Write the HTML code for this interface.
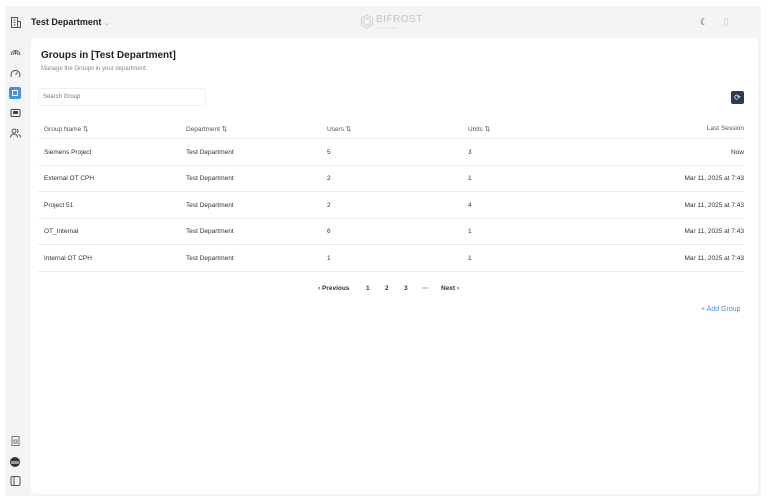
<!DOCTYPE html>
<html><head><meta charset="utf-8"><style>
*{box-sizing:border-box;margin:0;padding:0}
body{width:768px;height:504px;background:#fff;font-family:"Liberation Sans",sans-serif;position:relative;overflow:hidden;color:#222}
.frame{position:absolute;left:5px;top:6px;width:756px;height:490px;background:#f3f4f6}
.main{position:absolute;left:31px;top:38px;width:727px;height:456px;background:#fff;border-radius:4px}
.t{position:absolute;white-space:nowrap}
.line{position:absolute;left:38px;width:706px;height:1px;background:#ececee}
.ico{position:absolute;left:10px;width:11px;height:10px}
</style></head><body>
<div class="frame"></div>
<svg style="position:absolute;left:10px;top:16px" width="12" height="13" viewBox="0 0 12 13" fill="none" stroke="#555" stroke-width="1"><rect x="1.5" y="1.5" width="6" height="10"/><path d="M7.5 5.5h3v6h-3M3.5 4h2M3.5 6.5h2M3.5 9h2"/></svg>
<div class="t" style="left:31px;top:17px;font-size:9px;font-weight:bold;color:#222">Test Department <span style="color:#aaa;font-weight:normal;font-size:7px">⌄</span></div>
<svg style="position:absolute;left:360px;top:14px" width="14" height="15" viewBox="0 0 14 15" fill="none" stroke="#c8c8c8" stroke-width="0.8"><path d="M7 1l5.5 3v7L7 14 1.5 11V4z"/><circle cx="7" cy="7.5" r="3.5"/></svg>
<div class="t" style="left:376px;top:14px;font-size:10px;color:#c4c4c4;letter-spacing:0.5px">BIFROST</div>
<div class="t" style="left:377px;top:26px;font-size:3px;color:#ccc;letter-spacing:1px">SYSTEMS</div>
<div class="t" style="left:700px;top:17px;font-size:9px;color:#333">☾</div>
<div style="position:absolute;left:724px;top:18px;width:4px;height:8px;border:1px solid #ddd"></div>
<svg class="ico" style="top:47px" viewBox="0 0 11 10" fill="none" stroke="#555" stroke-width="1"><path d="M1 8a4.5 4.5 0 0 1 9 0M3 8a2.5 2.5 0 0 1 5 0M5.5 3.5v4"/></svg>
<svg class="ico" style="top:68px" viewBox="0 0 11 10" fill="none" stroke="#555" stroke-width="1"><path d="M1.5 9a4.5 4.5 0 1 1 8 0M5.5 6.5l2-2"/></svg>
<div style="position:absolute;left:9px;top:87px;width:12px;height:12px;background:#4a8fe7;border-radius:2px"><div style="position:absolute;left:3px;top:3px;width:6px;height:6px;border:1px solid #fff"></div></div>
<svg class="ico" style="top:108px" viewBox="0 0 11 10" fill="none" stroke="#444" stroke-width="1"><rect x="1" y="1.5" width="9" height="7" rx="1"/><rect x="3.5" y="3.5" width="4" height="2" fill="#444"/></svg>
<svg class="ico" style="top:128px" viewBox="0 0 11 10" fill="none" stroke="#555" stroke-width="1"><circle cx="4" cy="3" r="2"/><path d="M0.5 9.5a3.5 3.5 0 0 1 7 0M7 1.2a2 2 0 0 1 0 3.6M8.5 6.5a3 3 0 0 1 2 3"/></svg>
<svg class="ico" style="top:436px" viewBox="0 0 11 10" fill="none" stroke="#777" stroke-width="1"><rect x="2" y="0.5" width="7" height="9"/><rect x="4" y="4" width="3" height="3"/></svg>
<div style="position:absolute;left:10px;top:457px;width:10px;height:10px;border-radius:50%;background:#333"><div style="position:absolute;left:1px;top:3.5px;width:8px;height:3px;background:#999"></div></div>
<svg class="ico" style="top:476px" viewBox="0 0 11 10" fill="none" stroke="#555" stroke-width="1"><rect x="1" y="0.5" width="9" height="9" rx="1.5"/><path d="M4 0.5v9"/></svg>
<div class="main"></div>
<div class="t" style="left:41px;top:50px;font-size:10px;font-weight:bold;color:#222">Groups in [Test Department]</div>
<div class="t" style="left:41px;top:66px;font-size:6px;color:#888">Manage the Groups in your department.</div>
<div style="position:absolute;left:38px;top:88px;width:168px;height:18px;border:1px solid #f0f0f0;border-radius:3px"></div>
<div class="t" style="left:43px;top:94px;font-size:6px;color:#777">Search Group</div>
<div style="position:absolute;left:731px;top:91px;width:13px;height:13px;background:#2b3d4f;border-radius:2px;color:#fff;font-size:8px;text-align:center;line-height:13px">⟳</div>
<div style="font-size:6.5px;color:#555">
<div class="t" style="left:44px;top:125px">Group Name ⇅</div>
<div class="t" style="left:186px;top:125px">Department ⇅</div>
<div class="t" style="left:327px;top:125px">Users ⇅</div>
<div class="t" style="left:468px;top:125px">Units ⇅</div>
<div class="t" style="right:24px;top:125px">Last Session</div>
</div>
<div class="line" style="top:138px"></div>
<div class="line" style="top:165px"></div>
<div class="line" style="top:191px"></div>
<div class="line" style="top:218px"></div>
<div class="line" style="top:244px"></div>
<div class="line" style="top:271px"></div>
<div style="font-size:6.5px;color:#333">
<div class="t" style="left:44px;top:149px">Siemens Project</div><div class="t" style="left:186px;top:149px">Test Department</div><div class="t" style="left:327px;top:149px">5</div><div class="t" style="left:468px;top:149px">3</div><div class="t" style="right:24px;top:149px">Now</div>
<div class="t" style="left:44px;top:175px">External OT CPH</div><div class="t" style="left:186px;top:175px">Test Department</div><div class="t" style="left:327px;top:175px">2</div><div class="t" style="left:468px;top:175px">1</div><div class="t" style="right:24px;top:175px">Mar 11, 2025 at 7:43</div>
<div class="t" style="left:44px;top:202px">Project 51</div><div class="t" style="left:186px;top:202px">Test Department</div><div class="t" style="left:327px;top:202px">2</div><div class="t" style="left:468px;top:202px">4</div><div class="t" style="right:24px;top:202px">Mar 11, 2025 at 7:43</div>
<div class="t" style="left:44px;top:228px">OT_Internal</div><div class="t" style="left:186px;top:228px">Test Department</div><div class="t" style="left:327px;top:228px">6</div><div class="t" style="left:468px;top:228px">1</div><div class="t" style="right:24px;top:228px">Mar 11, 2025 at 7:43</div>
<div class="t" style="left:44px;top:255px">Internal OT CPH</div><div class="t" style="left:186px;top:255px">Test Department</div><div class="t" style="left:327px;top:255px">1</div><div class="t" style="left:468px;top:255px">1</div><div class="t" style="right:24px;top:255px">Mar 11, 2025 at 7:43</div>
</div>
<div style="font-size:6.5px;font-weight:bold;color:#333">
<div class="t" style="left:318px;top:285px">‹ Previous</div>
<div class="t" style="left:366px;top:285px">1</div>
<div class="t" style="left:385px;top:285px">2</div>
<div class="t" style="left:404px;top:285px">3</div>
<div class="t" style="left:422px;top:285px">···</div>
<div class="t" style="left:441px;top:285px">Next ›</div>
</div>
<div class="t" style="left:701px;top:306px;font-size:7px;color:#4a8fe7">+ Add Group</div>
</body></html>
